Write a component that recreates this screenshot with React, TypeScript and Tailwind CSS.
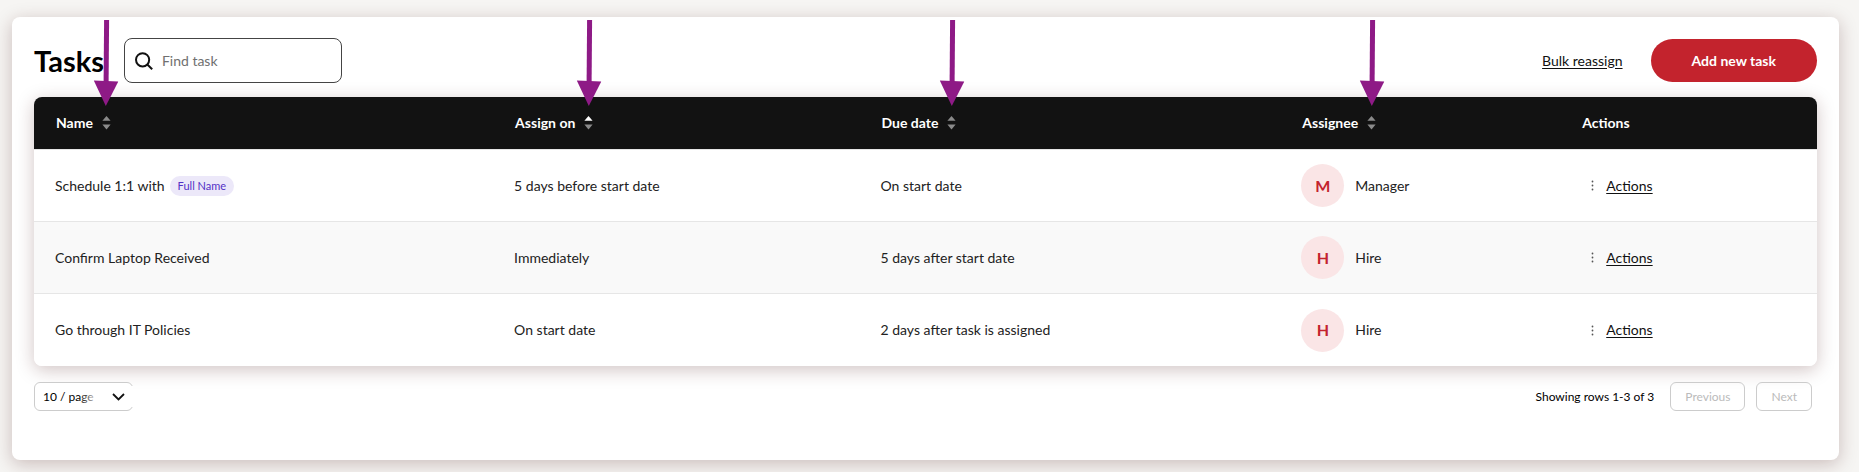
import React, { useState } from 'react';
import { clsx } from 'clsx';

type SortDirection = 'asc' | 'desc' | null;

interface Task {
  name: string;
  token?: string;
  assignOn: string;
  dueDate: string;
  assignee: string;
}

interface Column {
  label: string;
  width: string;
  sortable: boolean;
}

const columns: Column[] = [
  { label: 'Name', width: 'w-[25.75%]', sortable: true },
  { label: 'Assign on', width: 'w-[20.55%]', sortable: true },
  { label: 'Due date', width: 'w-[23.6%]', sortable: true },
  { label: 'Assignee', width: 'w-[15.7%]', sortable: true },
  { label: 'Actions', width: 'w-[14.4%]', sortable: false },
];

const tasks: Task[] = [
  { name: 'Schedule 1:1 with', token: 'Full Name', assignOn: '5 days before start date', dueDate: 'On start date', assignee: 'Manager' },
  { name: 'Confirm Laptop Received', assignOn: 'Immediately', dueDate: '5 days after start date', assignee: 'Hire' },
  { name: 'Go through IT Policies', assignOn: 'On start date', dueDate: '2 days after task is assigned', assignee: 'Hire' },
];

const SortIcon: React.FC<{ direction: SortDirection }> = ({ direction }) => (
  <svg width="9" height="14" viewBox="0 0 9 14" aria-hidden="true">
    <path d="M4.5 0 8.6 4.8H.4z" fill={direction === 'asc' ? '#fff' : '#8a8a8a'} />
    <path d="M.4 8.6h8.2L4.5 13.6z" fill={direction === 'desc' ? '#fff' : '#8a8a8a'} />
  </svg>
);

// Callout arrow that points down at a column's sort icon
const Arrow: React.FC = () => (
  <svg
    className="pointer-events-none absolute bottom-full left-1/2 z-10 mb-[10px] -translate-x-1/2"
    width="25"
    height="86"
    viewBox="0 0 25 86"
    aria-hidden="true"
  >
    <path d="M10.6 0h5l-.5 62h-5z" fill="#8e1a86" />
    <path d="M.3 60.6 24.8 61.4 12.3 86z" fill="#8e1a86" />
  </svg>
);

const App: React.FC = () => {
  const [search, setSearch] = useState('');
  const [sort, setSort] = useState<{ label: string; direction: SortDirection }>({ label: 'Assign on', direction: 'asc' });

  const toggleSort = (label: string) => {
    setSort(prev => ({ label, direction: prev.label === label && prev.direction === 'asc' ? 'desc' : 'asc' }));
  };

  const rows = tasks.filter(task => task.name.toLowerCase().includes(search.toLowerCase()));

  return (
    <div className="min-h-screen bg-[#f6f5f3] pt-[17px] pr-5 pb-3 pl-3 font-['Lato',sans-serif] text-sm text-[#222]">
      <main className="rounded-lg bg-white px-[22px] pt-[21px] pb-[49px] shadow-[0_4px_18px_rgba(70,20,20,0.25)]">
        <div className="flex items-center">
          <h1 className="text-[29px] leading-8 font-bold text-black">Tasks</h1>
          <label className="ml-5 flex h-[45px] w-[218px] items-center rounded-lg border border-[#444] pl-[10px]">
            <svg width="18" height="18" viewBox="0 0 18 18" fill="none" stroke="#111" strokeWidth="2" aria-hidden="true">
              <circle cx="7.6" cy="7.8" r="6.6" />
              <path d="m12.3 12.5 4.9 4.7" />
            </svg>
            <input
              type="text"
              aria-label="Find task"
              placeholder="Find task"
              value={search}
              onChange={(e) => setSearch(e.target.value)}
              className="ml-[9px] min-w-0 flex-1 outline-none placeholder:text-[#707070]"
            />
          </label>
          <a href="#bulk" className="ml-auto text-[#111] underline underline-offset-2">Bulk reassign</a>
          <button className="ml-7 h-[43px] rounded-full bg-[#c3232d] px-[41px] font-bold text-white">Add new task</button>
        </div>

        <table className="mt-[14px] w-full table-fixed border-separate border-spacing-0 rounded-lg shadow-[0_4px_18px_rgba(70,20,20,0.25)]">
          <thead>
            <tr className="h-[52px] text-left text-white">
              {columns.map(column => (
                <th
                  key={column.label}
                  className={clsx('bg-[#121212] pl-[22px] font-bold first:rounded-tl-lg last:rounded-tr-lg', column.width)}
                >
                  {column.sortable ? (
                    <button className="flex items-center gap-[9px]" onClick={() => toggleSort(column.label)}>
                      {column.label}
                      <span className="relative">
                        <SortIcon direction={sort.label === column.label ? sort.direction : null} />
                        <Arrow />
                      </span>
                    </button>
                  ) : column.label}
                </th>
              ))}
            </tr>
          </thead>
          <tbody>
            {rows.map(task => (
              <tr
                key={task.name}
                className="h-[72px] last:h-[73px] [&>td]:border-t [&>td]:border-[#e6e6e6] [&>td]:bg-white [&>td]:pl-[21px] even:[&>td]:bg-[#f9f9f9] last:[&>td:first-child]:rounded-bl-lg last:[&>td:last-child]:rounded-br-lg"
              >
                <td>
                  <div className="flex items-center gap-[5px]">
                    {task.name}
                    {task.token && (
                      <span className="rounded-full bg-[#ece8f9] px-2 text-[11px] leading-5 text-[#5330c6]">
                        {task.token}
                      </span>
                    )}
                  </div>
                </td>
                <td>{task.assignOn}</td>
                <td>{task.dueDate}</td>
                <td>
                  <div className="flex items-center gap-[11px]">
                    <span className="flex size-[43px] items-center justify-center rounded-full bg-[#fae5e6] text-base font-bold text-[#c3232d]">
                      {task.assignee[0]}
                    </span>
                    {task.assignee}
                  </div>
                </td>
                <td>
                  <div className="flex items-center gap-3 pl-[10px]">
                    <svg width="3" height="11" viewBox="0 0 3 11" fill="#555" aria-hidden="true">
                      <circle cx="1.5" cy="1.5" r="0.9" />
                      <circle cx="1.5" cy="5.5" r="0.9" />
                      <circle cx="1.5" cy="9.5" r="0.9" />
                    </svg>
                    <a href="#actions" className="text-[#111] underline underline-offset-2">Actions</a>
                  </div>
                </td>
              </tr>
            ))}
          </tbody>
        </table>

        <div className="mt-4 flex items-center pr-[5px] text-xs text-black">
          <div className="relative">
            <select aria-label="Rows per page" className="h-[29px] w-[99px] appearance-none rounded-md border border-[#ccc] bg-white pl-2">
              <option>10 / page</option>
              <option>25 / page</option>
              <option>50 / page</option>
            </select>
            <span className="pointer-events-none absolute inset-y-1 right-0 flex w-[54px] items-center justify-end bg-linear-to-r from-transparent to-white to-40% pr-2">
              <svg width="13" height="8" viewBox="0 0 13 8" fill="none" stroke="#111" strokeWidth="1.8" aria-hidden="true">
                <path d="m1 1 5.5 5.4L12 1" />
              </svg>
            </span>
          </div>
          <span className="ml-auto">Showing rows 1-3 of 3</span>
          <button disabled className="ml-4 h-[29px] rounded-md border border-[#ccc] px-[14px] text-[#bbb]">Previous</button>
          <button disabled className="ml-[11px] h-[29px] rounded-md border border-[#ccc] px-[14px] text-[#bbb]">Next</button>
        </div>
      </main>
    </div>
  );
};

export default App;
